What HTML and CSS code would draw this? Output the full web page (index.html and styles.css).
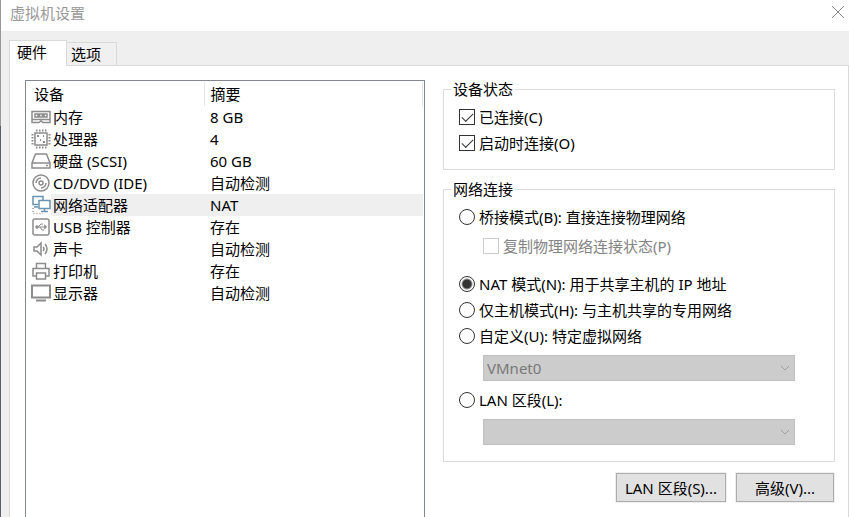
FILE: index.html
```html
<!DOCTYPE html>
<html lang="zh-CN">
<head>
  <meta charset="UTF-8" />
  <meta name="viewport" content="width=device-width, initial-scale=1.0" />
  <title>虚拟机设置</title>
  <link rel="stylesheet" href="styles.css">
</head>
<body>
  <header class="titlebar">
    <h1>虚拟机设置</h1>
    <button class="close-btn" aria-label="关闭">
      <svg width="14" height="14" viewBox="0 0 14 14"><path d="M1 1l12 12M13 1L1 13" /></svg>
    </button>
  </header>

  <nav class="tabs">
    <button class="tab-btn active">硬件</button>
    <button class="tab-btn">选项</button>
  </nav>

  <main class="panel">
    <div class="device-list">
      <table>
        <colgroup><col class="col-icon" /><col class="col-device" /><col /></colgroup>
        <thead>
          <tr><th colspan="2">设备</th><th class="summary">摘要</th></tr>
        </thead>
        <tbody>
          <tr>
            <td class="icon"><svg width="20" height="20" viewBox="0 0 20 20"><path d="M1 4.500h18v8H1zM1 12v3.500h7l2-1.500 2 1.500h7V12" /><path d="M4 7h3v3H4zM8.500 7h3v3h-3zM13 7h3v3h-3z" /></svg></td>
            <td>内存</td><td>8 GB</td>
          </tr>
          <tr>
            <td class="icon"><svg width="20" height="20" viewBox="0 0 20 20"><path d="M4 4h12v12H4z" /><path d="M5 1.500h11M5 18.500h11M1.500 5v11M18.500 5v11" stroke-dasharray="1.500 1.500" stroke-width="2" /><path d="M6 7h2M12 13h2M12 7h1M9 11h1" stroke-width="2" /></svg></td>
            <td>处理器</td><td>4</td>
          </tr>
          <tr>
            <td class="icon"><svg width="20" height="20" viewBox="0 0 20 20"><path d="M4.500 3h11L19 12v5H1v-5zM1 12h18M15 14.500h2" /></svg></td>
            <td>硬盘 (SCSI)</td><td>60 GB</td>
          </tr>
          <tr>
            <td class="icon"><svg width="20" height="20" viewBox="0 0 20 20"><circle cx="10" cy="10" r="8" /><circle cx="10" cy="10" r="2" /><path d="M5 10a5 5 0 0 1 5-5M15 10a5 5 0 0 1-5 5" /></svg></td>
            <td>CD/DVD (IDE)</td><td>自动检测</td>
          </tr>
          <tr class="selected">
            <td class="icon net"><svg width="20" height="20" viewBox="0 0 20 20"><path d="M7 9.500H2v-8h10v4M3 12h4" /><path d="M8 5.500h11v8H8zM13.500 14v2.500M10 16.500h7" /><path d="M2 13v5.500h10" stroke-dasharray="1 2" class="gray" /></svg></td>
            <td>网络适配器</td><td>NAT</td>
          </tr>
          <tr>
            <td class="icon"><svg width="20" height="20" viewBox="0 0 20 20"><rect x="2" y="2" width="16" height="16" rx="2" /><path d="M6 10h9M7 10l3-3h2M9 10l2 3h2" stroke-width="1" /><circle cx="6" cy="10" r="1" /><path d="M14 9l1 1-1 1z" /></svg></td>
            <td>USB 控制器</td><td>存在</td>
          </tr>
          <tr>
            <td class="icon"><svg width="20" height="20" viewBox="0 0 20 20"><path d="M3 8h3l4-4v12l-4-4H3zM12 8q2 2 0 4M14 5q4 5 0 10" /></svg></td>
            <td>声卡</td><td>自动检测</td>
          </tr>
          <tr>
            <td class="icon"><svg width="20" height="20" viewBox="0 0 20 20"><path d="M5.500 7V2.500h9V7M5 15H2V7.500h16V15h-3M5.500 12h9v6h-9z" /></svg></td>
            <td>打印机</td><td>存在</td>
          </tr>
          <tr>
            <td class="icon"><svg width="20" height="20" viewBox="0 0 20 20"><path d="M1 2.500h18v12H1zM5 17.500h10" stroke-width="2" /></svg></td>
            <td>显示器</td><td>自动检测</td>
          </tr>
        </tbody>
      </table>
    </div>

    <form class="settings">
      <fieldset>
        <legend>设备状态</legend>
        <label class="option"><input type="checkbox" checked />已连接(C)</label>
        <label class="option"><input type="checkbox" checked />启动时连接(O)</label>
      </fieldset>

      <fieldset>
        <legend>网络连接</legend>
        <label class="option"><input type="radio" name="net" />桥接模式(B): 直接连接物理网络</label>
        <label class="option sub disabled"><input type="checkbox" disabled />复制物理网络连接状态(P)</label>
        <label class="option"><input type="radio" name="net" checked />NAT 模式(N): 用于共享主机的 IP 地址</label>
        <label class="option"><input type="radio" name="net" />仅主机模式(H): 与主机共享的专用网络</label>
        <label class="option"><input type="radio" name="net" />自定义(U): 特定虚拟网络</label>
        <div class="select-wrap">
          <select aria-label="特定虚拟网络" disabled><option>VMnet0</option></select>
          <svg width="10" height="6" viewBox="0 0 10 6"><path d="M1 1l4 4 4-4" /></svg>
        </div>
        <label class="option"><input type="radio" name="net" />LAN 区段(L):</label>
        <div class="select-wrap">
          <select aria-label="LAN 区段" disabled><option></option></select>
          <svg width="10" height="6" viewBox="0 0 10 6"><path d="M1 1l4 4 4-4" /></svg>
        </div>
      </fieldset>

      <div class="actions">
        <button type="button">LAN 区段(S)...</button>
        <button type="button">高级(V)...</button>
      </div>
    </form>
  </main>
</body>
</html>
```
FILE: styles.css
```css
* { box-sizing: border-box; }
body { margin: 0; min-height: 100vh; display: flex; flex-direction: column; padding-left: 1px; background: linear-gradient(#999 126px, #56606a 126px) left / 1px 100% no-repeat #efefef; color: #000; }
body, button, select { font-family: "Noto Sans", "Noto Sans CJK SC", sans-serif; font-size: 15px; line-height: 22px; }
button { color: #000; }
svg { display: block; fill: none; }

.titlebar { display: flex; justify-content: space-between; height: 31px; padding: 2px 4px 0 9px; background: #fff; }
.titlebar h1 { margin: 0; font-size: 15px; font-weight: normal; color: #999; }
.close-btn { align-self: flex-start; padding: 3px 0; border: none; background: none; }
.close-btn svg { stroke: #888; }

.tabs { display: flex; align-items: flex-end; padding: 9px 0 0 8px; }
.tab-btn { height: 23px; padding: 0 15px 0 4px; border: 1px solid #d9d9d9; border-left: none; border-bottom: none; background: #f0f0f0; }
.tab-btn.active { height: 26px; margin-bottom: -1px; padding: 0 19px 3px 7px; border-left: 1px solid #d9d9d9; background: #fff; z-index: 1; }

.panel { flex: 1; display: grid; grid-template-columns: 400fr 392fr; gap: 18px; margin-left: 8px; padding: 12px 13px 0 15px; border: 1px solid #d9d9d9; border-bottom: none; background: #fff; }

.device-list { margin-top: 2px; padding: 1px 1px 0 0; border: 1px solid #828790; border-bottom: none; }
.device-list table { width: 100%; border-collapse: collapse; table-layout: fixed; }
.col-icon { width: 25px; }
.col-device { width: 153px; }
.device-list th { height: 24px; padding: 0 0 0 8px; border-right: 1px solid #e5e5e5; font-weight: normal; text-align: left; }
.device-list th.summary { padding-left: 6px; }
.device-list td { height: 22px; padding: 0 0 0 2px; }
.device-list td:last-child { padding-left: 6px; }
.device-list .icon { padding-left: 5px; background: #fff; }
.device-list tr.selected { background: #efefef; }
.icon svg { stroke: #8c8c8c; stroke-width: 1.500; }
.icon.net svg { stroke: #6a93b0; }
.icon .gray { stroke: #999; }

.settings { min-width: 0; }
fieldset { min-width: 0; margin: 0 0 8px; padding: 4px 15px 13px; border: 1px solid #dcdcdc; }
fieldset + fieldset { margin-bottom: 11px; padding-bottom: 16px; }
legend { margin-left: -8px; padding: 0 2px; }
.option { display: flex; align-items: center; gap: 4px; height: 26px; }
.option.sub { margin: 3px 0 12px 24px; }
.option.disabled { color: #838383; }
.option input { appearance: none; flex: none; width: 16px; height: 16px; margin: 0; border: 1px solid #333; background: #fff; }
.option input[type="radio"] { border-radius: 50%; }
.option input[type="radio"]:checked { background: radial-gradient(circle, #333 4px, #fff 6px); }
.option input[type="checkbox"]:checked::before { content: ""; display: block; width: 10px; height: 5px; margin: 3px 2px; border: solid #333; border-width: 0 0 1px 1px; transform: rotate(-45deg); }
.option input:disabled { border-color: #ccc; }

.select-wrap { display: grid; align-items: center; margin: 6px 24px; }
.select-wrap select { grid-area: 1 / 1; appearance: none; width: 100%; height: 26px; padding: 0 3px; border: 1px solid #bfbfbf; border-radius: 0; background: #ccc; color: #787878; opacity: 1; }
.select-wrap svg { grid-area: 1 / 1; justify-self: end; margin-right: 5px; stroke: #a0a0a0; }
.select-wrap:last-child { margin-bottom: 0; }

.actions { display: flex; justify-content: flex-end; gap: 10px; padding-right: 1px; }
.actions button { height: 29px; padding: 0 8px; border: 1px solid #adadad; background: #e1e1e1; box-shadow: 0 0 0 1px #efefef; }
.actions button:last-child { padding: 0 18px; }
```
